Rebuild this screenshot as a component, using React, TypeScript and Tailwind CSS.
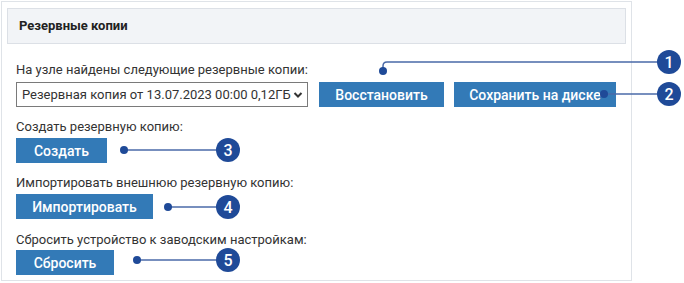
const font = { fontFamily: 'Roboto, "Noto Sans", sans-serif' };

function Btn({ label, w }: { label: string; w: string }) {
  return (
    <button className={`${w} h-[25px] bg-[#337ab7] text-white text-[14px] font-medium leading-none flex items-center justify-center`}>
      {label}
    </button>
  );
}

function Callout({ d, dot, c, n }: { d: string; dot: [number, number]; c: [number, number]; n: string }) {
  return (
    <g>
      <path d={d} fill="none" stroke="#4a6aa8" strokeWidth="1.5" />
      <circle cx={dot[0]} cy={dot[1]} r="4" fill="#1f4a98" />
      <circle cx={c[0]} cy={c[1]} r="12" fill="#1f4a98" />
      <text x={c[0]} y={c[1] + 5.5} textAnchor="middle" fill="#fff" fontSize="16" fontWeight="500" style={font}>
        {n}
      </text>
    </g>
  );
}

export default function App() {
  return (
    <div className="relative w-[684px] h-[283px] bg-white text-[#333]" style={font}>
      <div className="absolute left-px top-px w-[631px] h-[280px] border border-[#dfe3e8] px-[5px] pt-[6px]">
        <div className="h-[36px] border border-[#dce0e6] bg-[#f2f4f7] px-[11px] flex items-center text-[13px] font-bold text-[#222]">
          Резервные копии
        </div>
        <div className="pl-[9px] text-[13px] leading-[16px]">
          <div className="mt-[18px]">На узле найдены следующие резервные копии:</div>
          <div className="mt-[4px] flex gap-[10px]">
            <div className="w-[292px] h-[25px] border border-[#7a7a7a] pl-[5px] pr-[4px] flex items-center justify-between">
              <span>Резервная копия от 13.07.2023 00:00 0,12ГБ</span>
              <svg width="10" height="8" viewBox="0 0 10 8">
                <path d="M1.5 2 L5 5.5 L8.5 2" fill="none" stroke="#333" strokeWidth="2" />
              </svg>
            </div>
            <Btn label="Восстановить" w="w-[125px] ml-px" />
            <Btn label="Сохранить на диске" w="w-[162px]" />
          </div>
          <div className="mt-[12px]">Создать резервную копию:</div>
          <div className="mt-[3px]">
            <Btn label="Создать" w="w-[91px]" />
          </div>
          <div className="mt-[12px]">Импортировать внешнюю резервную копию:</div>
          <div className="mt-[3px]">
            <Btn label="Импортировать" w="w-[137px]" />
          </div>
          <div className="mt-[13px]">Сбросить устройство к заводским настройкам:</div>
          <div className="mt-[2px]">
            <Btn label="Сбросить" w="w-[98px]" />
          </div>
        </div>
      </div>
      <svg className="absolute left-0 top-0" width="684" height="283">
        <Callout d="M383 71 V66 Q383 62 387 62 H669" dot={[383, 71]} c={[669, 62]} n="1" />
        <Callout d="M604 94 H669" dot={[604, 94]} c={[669, 94]} n="2" />
        <Callout d="M124 150 H228" dot={[124, 150]} c={[228, 150]} n="3" />
        <Callout d="M168 207 H228" dot={[168, 207]} c={[228, 207]} n="4" />
        <Callout d="M137 260 H228" dot={[137, 260]} c={[228, 260]} n="5" />
      </svg>
    </div>
  );
}
